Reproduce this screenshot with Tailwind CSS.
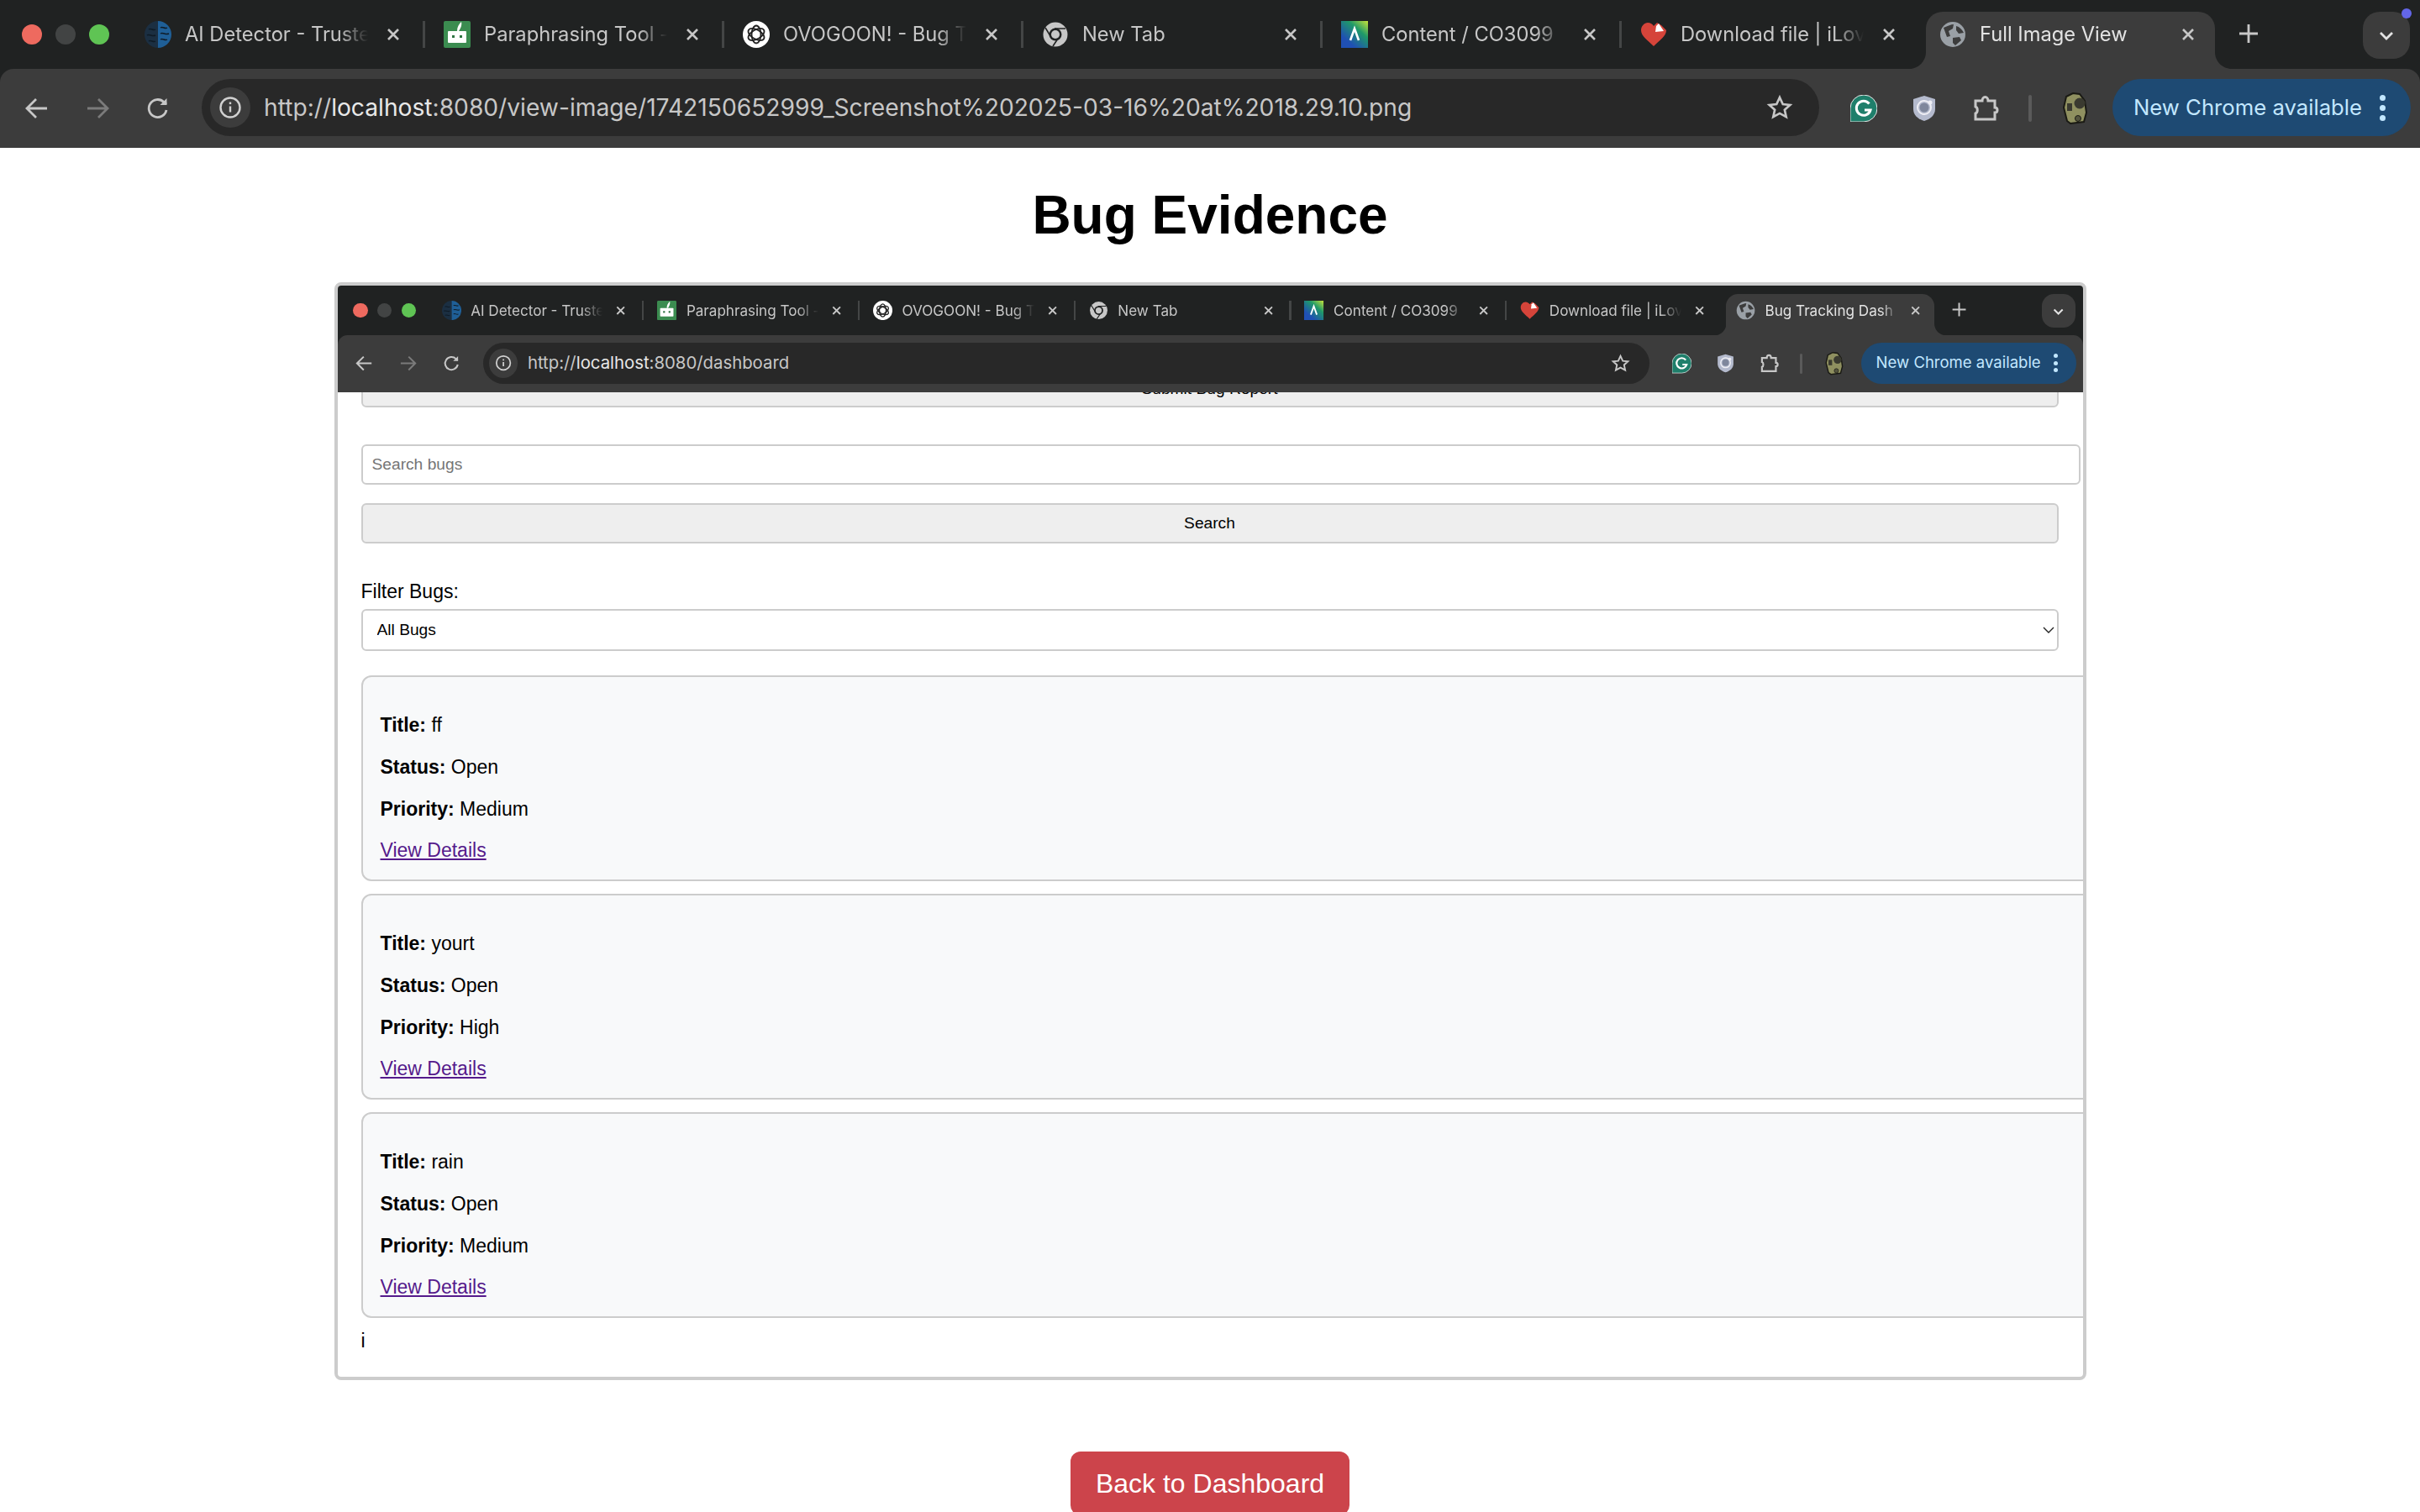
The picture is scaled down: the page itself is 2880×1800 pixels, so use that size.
<!DOCTYPE html>
<html lang="en">
<head>
  <meta charset="UTF-8" />
  <title>Full Image View</title>
  <script src="https://cdn.jsdelivr.net/npm/@tailwindcss/browser@4"></script>
</head>
<body class="bg-white text-black font-['Liberation_Sans',Arial,sans-serif] w-[2880px] h-[1800px] overflow-hidden">
  <!-- outer browser bar -->
  <div id="outerChrome" class="w-[2880px] h-[176px]"></div>

  <main class="flex flex-col items-center">
    <h1 class="mt-[43px] text-[64px] leading-[74px] font-bold">Bug Evidence</h1>

    <!-- the evidence screenshot -->
    <div class="mt-[43px] w-[2085px] h-[1307px] border-4 border-[#cccccc] rounded-lg overflow-hidden bg-white shrink-0">
      <div id="innerChrome" class="relative z-10 w-[2880px] h-[176px] [zoom:0.7212]"></div>

      <div class="-mt-[30px] pl-[28px] w-[2200px] text-[23px]">
        <button class="block w-[2020px] h-[48px] pt-[5px] bg-[#eeeeee] border-2 border-[#cccccc] rounded-md text-[19.2px]">Submit Bug Report</button>

        <input type="text" placeholder="Search bugs" class="block mt-[44px] w-[2046px] h-[48px] px-[11px] bg-white border-2 border-[#cccccc] rounded-md text-[19.2px] placeholder:text-[#757575]" />
        <button class="block mt-[22px] w-[2020px] h-[48px] bg-[#eeeeee] border-2 border-[#cccccc] rounded-md text-[19.2px]">Search</button>

        <label class="block mt-[44px] h-[26px] leading-[26px]">Filter Bugs:</label>
        <div class="relative mt-[8px] w-[2020px] h-[50px]">
          <select class="block w-full h-full pl-[17px] appearance-none bg-white border-2 border-[#cccccc] rounded-md text-[19.2px]">
            <option>All Bugs</option>
          </select>
          <svg class="absolute right-[4px] top-[17px] w-[16px] h-[16px]" viewBox="0 0 16 16" fill="none" stroke="#222" stroke-width="1.4"><path d="M2 5l6 6 6-6"/></svg>
        </div>

        <div class="mt-[29px] flex flex-col gap-[15px]">
          <div class="w-[2060px] h-[245px] pt-[44px] pl-[21px] bg-[#f8f9fa] border-2 border-[#cccccc] rounded-xl flex flex-col gap-[23.8px] leading-[26px]">
            <p><strong>Title:</strong> ff</p>
            <p><strong>Status:</strong> Open</p>
            <p><strong>Priority:</strong> Medium</p>
            <p><a class="text-[#551a8b] underline">View Details</a></p>
          </div>
          <div class="w-[2060px] h-[245px] pt-[44px] pl-[21px] bg-[#f8f9fa] border-2 border-[#cccccc] rounded-xl flex flex-col gap-[23.8px] leading-[26px]">
            <p><strong>Title:</strong> yourt</p>
            <p><strong>Status:</strong> Open</p>
            <p><strong>Priority:</strong> High</p>
            <p><a class="text-[#551a8b] underline">View Details</a></p>
          </div>
          <div class="w-[2060px] h-[245px] pt-[44px] pl-[21px] bg-[#f8f9fa] border-2 border-[#cccccc] rounded-xl flex flex-col gap-[23.8px] leading-[26px]">
            <p><strong>Title:</strong> rain</p>
            <p><strong>Status:</strong> Open</p>
            <p><strong>Priority:</strong> Medium</p>
            <p><a class="text-[#551a8b] underline">View Details</a></p>
          </div>
        </div>
        <p class="mt-[14px] leading-[26px]">i</p>
      </div>
    </div>

    <button class="mt-[85px] w-[332px] h-[76px] shrink-0 bg-[#cc444b] text-white text-[32px] rounded-xl">Back to Dashboard</button>
  </main>

  <script>
    const icons = {
      brain: `<svg viewBox="0 0 32 32" class="w-8 h-8"><path d="M16 0a16 16 0 0 0 0 32z" fill="#1b2f42"/><path d="M16 0a16 16 0 0 1 0 32z" fill="#1f5f97"/><path d="M5 10c3-2 5 2 8 0M3 17c3-2 6 2 10 0M5 24c3-2 5 2 8 0M19 8c3-2 5 2 8 0M19 15c3-2 6 2 10 0M19 22c3-2 5 2 8 0" fill="none" stroke="#0f1b26" stroke-width="1.4"/></svg>`,
      quill: `<svg viewBox="0 0 32 32" class="w-8 h-8"><rect width="32" height="32" rx="2" fill="#3b8c50"/><path d="M16 12c0-5 2-8 5-11 1 4-1 8-3 11z" fill="#fff"/><rect x="5" y="12" width="22" height="14" rx="1" fill="#fff"/><rect x="10" y="17" width="3" height="3" fill="#2f7443"/><rect x="19" y="17" width="3" height="3" fill="#2f7443"/></svg>`,
      openai: `<svg viewBox="0 0 32 32" class="w-8 h-8"><circle cx="16" cy="16" r="16" fill="#fff"/><g fill="none" stroke="#222" stroke-width="1.8"><ellipse cx="16" cy="16" rx="5.5" ry="10.5"/><ellipse cx="16" cy="16" rx="5.5" ry="10.5" transform="rotate(60 16 16)"/><ellipse cx="16" cy="16" rx="5.5" ry="10.5" transform="rotate(120 16 16)"/></g></svg>`,
      chromeIcon: `<svg viewBox="0 0 32 32" class="w-8 h-8"><circle cx="16" cy="16" r="14.5" fill="#c7c7c7"/><path d="M4 8l8 13M28 9H15M13 30l8-12" stroke="#202222" stroke-width="1.6" fill="none"/><circle cx="16" cy="16" r="7.5" fill="#202222"/><circle cx="16" cy="16" r="5" fill="#c7c7c7"/></svg>`,
      content: `<svg viewBox="0 0 32 32" class="w-8 h-8"><defs><linearGradient id="contentGrad" x1="1" y1="0" x2="0.3" y2="0.8"><stop offset="0" stop-color="#c8e23a"/><stop offset="0.45" stop-color="#1f9a68"/><stop offset="1" stop-color="#1f50b4"/></linearGradient></defs><rect width="32" height="32" fill="url(#contentGrad)"/><path d="M11 23l5-14 5 14" fill="none" stroke="#fff" stroke-width="2.6"/></svg>`,
      heart: `<svg viewBox="0 0 32 32" class="w-8 h-8"><path d="M16 30C9 23 1 18 1 11 1 6 5 2 9 2c3 0 6 2 7 4l4-4 5 3 6 6c0 7-8 12-15 19z" fill="#d5443a"/><path d="M19 6l3-3 6 9-10 1z" fill="#fff"/></svg>`,
      globe: `<svg viewBox="0 0 32 32" class="w-8 h-8"><circle cx="16" cy="16" r="15" fill="#9aa0a6"/><path d="M5 8c5-2 9-4 12-4l-1 5-5 3 2 6-4 1zM20 6c4 1 7 4 9 8l-6 1-3-4zM16 20l8-1 2 4-7 6-3-3z" fill="#3c3c3c"/></svg>`,
      close: `<svg viewBox="0 0 24 24" class="w-6 h-6" fill="none" stroke="#c7c7c7" stroke-width="2.6"><path d="M6 6l12 12M18 6L6 18"/></svg>`
    };

    // titles stop where the tab cuts them off in the picture
    const tabs = [
      { icon: icons.brain, title: 'AI Detector - Truste' },
      { icon: icons.quill, title: 'Paraphrasing Tool -' },
      { icon: icons.openai, title: 'OVOGOON! - Bug T' },
      { icon: icons.chromeIcon, title: 'New Tab' },
      { icon: icons.content, title: 'Content / CO3099' }
    ];

    function tabItem(tab) {
      return `<div class="w-[356px] h-[82px] flex items-center shrink-0">
        ${tab.icon}
        <div class="ml-4 w-[218px] text-[23.7px] text-[#c7c7c7] overflow-hidden whitespace-nowrap [mask-image:linear-gradient(to_right,black_84%,transparent)]">${tab.title}</div>
        <div class="ml-[18px]">${icons.close}</div>
        <div class="ml-[23px] w-[3px] h-[32px] bg-[#444646]"></div>
      </div>`;
    }

    function chrome(activeTitle, url, showDot) {
      const scheme = url.slice(0, 7);
      const host = url.slice(7, url.indexOf(':8080'));
      const rest = url.slice(7 + host.length);
      const dot = showDot ? `<div class="absolute right-[10px] top-[10px] w-[12px] h-[12px] rounded-full bg-[#6366e8]"></div>` : '';
      return `<div class="w-[2880px] h-[176px] bg-[#202222] font-['Inter',sans-serif] overflow-hidden">
        <div class="h-[82px] flex items-center relative">
          <div class="flex gap-4 pl-[26px] w-[172px] shrink-0">
            <span class="w-6 h-6 rounded-full bg-[#ee6a5f]"></span>
            <span class="w-6 h-6 rounded-full bg-[#424444]"></span>
            <span class="w-6 h-6 rounded-full bg-[#5fc454]"></span>
          </div>
          ${tabs.map(tabItem).join('')}
          <div class="w-[340px] h-[82px] flex items-center shrink-0">
            ${icons.heart}
            <div class="ml-4 w-[218px] text-[23.7px] text-[#c7c7c7] overflow-hidden whitespace-nowrap [mask-image:linear-gradient(to_right,black_84%,transparent)]">Download file | iLov</div>
            <div class="ml-[18px]">${icons.close}</div>
          </div>
          <div class="relative mt-[14px] w-[344px] h-[68px] pl-[16px] shrink-0 flex items-center pb-[14px] bg-[#3c3c3c] rounded-t-[20px]">
            <svg class="absolute -left-[20px] bottom-0 w-[20px] h-[20px]" viewBox="0 0 20 20"><path d="M20 0v20H0c11 0 20-9 20-20z" fill="#3c3c3c"/></svg>
            <svg class="absolute -right-[20px] bottom-0 w-[20px] h-[20px]" viewBox="0 0 20 20"><path d="M0 0v20h20C9 20 0 11 0 0z" fill="#3c3c3c"/></svg>
            ${icons.globe}
            <div class="ml-4 w-[218px] text-[23.7px] text-[#e3e3e3] overflow-hidden whitespace-nowrap [mask-image:linear-gradient(to_right,black_88%,transparent)]">${activeTitle}</div>
            <div class="ml-[18px]">${icons.close}</div>
          </div>
          <svg class="ml-[24px] w-[32px] h-[32px] -mt-[2px]" viewBox="0 0 32 32" fill="none" stroke="#c7c7c7" stroke-width="2.8"><path d="M16 5v22M5 16h22"/></svg>
          <div class="absolute right-[12px] top-[14px] w-[56px] h-[56px] rounded-[20px] bg-[#3c3c3c] flex items-center justify-center">
            <svg class="w-[24px] h-[24px]" viewBox="0 0 24 24" fill="none" stroke="#e3e3e3" stroke-width="2.8"><path d="M5 9l7 7 7-7"/></svg>
          </div>
          ${dot}
        </div>

        <div class="h-[94px] bg-[#3c3c3c] rounded-t-[16px] flex items-center relative">
          <svg class="absolute left-[28px] w-[32px] h-[32px]" viewBox="0 0 32 32" fill="none" stroke="#c7c7c7" stroke-width="2.8"><path d="M28 16H5M15 5L4 16l11 11"/></svg>
          <svg class="absolute left-[100px] w-[32px] h-[32px]" viewBox="0 0 32 32" fill="none" stroke="#7b7b7b" stroke-width="2.8"><path d="M4 16h23M17 5l11 11-11 11"/></svg>
          <svg class="absolute left-[172px] w-[32px] h-[32px]" viewBox="0 0 32 32" fill="none" stroke="#c7c7c7" stroke-width="2.8"><path d="M26 18a10.5 10.5 0 1 1-3-9.5L26 11"/><path d="M26.5 4v8h-8" fill="#c7c7c7" stroke="none"/></svg>

          <div class="absolute left-[240px] top-[12px] w-[1925px] h-[68px] rounded-full bg-[#282828] flex items-center pl-[10px]">
            <div class="w-[48px] h-[48px] rounded-full bg-[#3c3c3c] flex items-center justify-center shrink-0">
              <svg class="w-[28px] h-[28px]" viewBox="0 0 28 28" fill="none" stroke="#d0d0d0" stroke-width="2.4"><circle cx="14" cy="14" r="11.5"/><path d="M14 12.5v7"/><path d="M14 7.5v2.6"/></svg>
            </div>
            <div class="ml-[16px] pt-[1px] text-[28.2px] text-[#c7c7c7] whitespace-nowrap">${scheme}<span class="text-[#e8e8e8]">${host}</span>${rest}</div>
            <svg class="absolute right-[31px] w-[32px] h-[32px]" viewBox="0 0 24 24" fill="none" stroke="#c7c7c7" stroke-width="2"><path d="M12 3l2.8 6 6.4.7-4.8 4.3 1.4 6.4L12 17.2l-5.800 3.2 1.400-6.400L2.800 9.700 9.200 9z"/></svg>
          </div>

          <svg class="absolute left-[2202px] w-[32px] h-[32px]" viewBox="0 0 32 32"><path d="M0 32V16a16 16 0 1 1 16 16z" fill="#1f7f6b" stroke="#e8e8e8" stroke-width="1"/><path d="M22.500 10.500a8.500 8.500 0 1 0 1.500 7.500h-7" fill="none" stroke="#fff" stroke-width="3"/></svg>
          <svg class="absolute left-[2274px] w-[32px] h-[32px]" viewBox="0 0 32 32"><path d="M16 1l13 4v12c0 7-6 12-13 14C9 29 3 24 3 17V5z" fill="#b4bacd"/><circle cx="16" cy="15" r="8" fill="none" stroke="#eeeef4" stroke-width="2"/><circle cx="16" cy="15" r="5.500" fill="#7f879c"/><circle cx="23" cy="9" r="2.500" fill="#eeeef4"/></svg>
          <svg class="absolute left-[2347px] w-[32px] h-[32px]" viewBox="0 0 32 32" fill="none" stroke="#c7c7c7" stroke-width="3"><path d="M4 7h8c0-6 7-6 7 0h8v8c4 0 4 6 0 6v8H4v-7c3-1 3-7 0-8z"/></svg>
          <div class="absolute left-[2414px] w-[4px] h-[32px] bg-[#5a5a5a] rounded-sm"></div>
          <svg class="absolute left-[2453px] w-[32px] h-[38px]" viewBox="0 0 32 38"><path d="M6 5l8-4 8 1 6 8 2 14-3 11-16 2-4-3-4-16z" fill="#8f9060" stroke="#1a1a14" stroke-width="2"/><circle cx="22" cy="13" r="6.500" fill="#3a3a30"/><rect x="7" y="13" width="6" height="9" fill="#3a3a30"/><circle cx="20" cy="31" r="3.500" fill="#55553f" stroke="#1a1a14"/></svg>

          <div class="absolute left-[2514px] top-[12px] w-[355px] h-[68px] rounded-full bg-[#1e4a73] flex items-center pl-[25px] text-[#c2e7ff] text-[25.7px] whitespace-nowrap">
            New Chrome available
            <div class="absolute left-[318px] flex flex-col gap-[5px]">
              <span class="w-[7px] h-[7px] rounded-full bg-[#c2e7ff]"></span>
              <span class="w-[7px] h-[7px] rounded-full bg-[#c2e7ff]"></span>
              <span class="w-[7px] h-[7px] rounded-full bg-[#c2e7ff]"></span>
            </div>
          </div>
        </div>
      </div>`;
    }

    document.getElementById('outerChrome').innerHTML = chrome('Full Image View', 'http://localhost:8080/view-image/1742150652999_Screenshot%202025-03-16%20at%2018.29.10.png', true);
    document.getElementById('innerChrome').innerHTML = chrome('Bug Tracking Dash', 'http://localhost:8080/dashboard', false);
  </script>
</body>
</html>
